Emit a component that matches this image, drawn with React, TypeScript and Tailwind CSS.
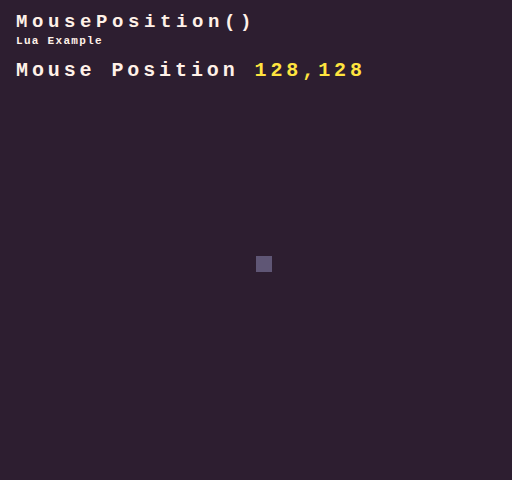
export default function App() {
  return (
    <div className="flex h-[480px] w-[512px] flex-col bg-[#2d1e30] px-4 pt-[13px] font-['Liberation_Mono',monospace] text-[#fff1e8]">
      <h1 className="text-[19px] font-bold leading-[19px] tracking-[4.6px]">MousePosition()</h1>
      <p className="mt-[3px] text-[11px] font-bold leading-[12px] tracking-[1.3px]">Lua Example</p>
      <div className="mt-[14px] flex text-[20px] font-bold leading-[20px] tracking-[3.9px]">
        <span>Mouse Position&nbsp;</span>
        <span className="text-[#ffe43f]">128,128</span>
      </div>
      <div className="flex flex-1 items-start">
        <div className="ml-[240px] mt-[175px] h-4 w-4 bg-[#5f5675]" />
      </div>
    </div>
  );
}
